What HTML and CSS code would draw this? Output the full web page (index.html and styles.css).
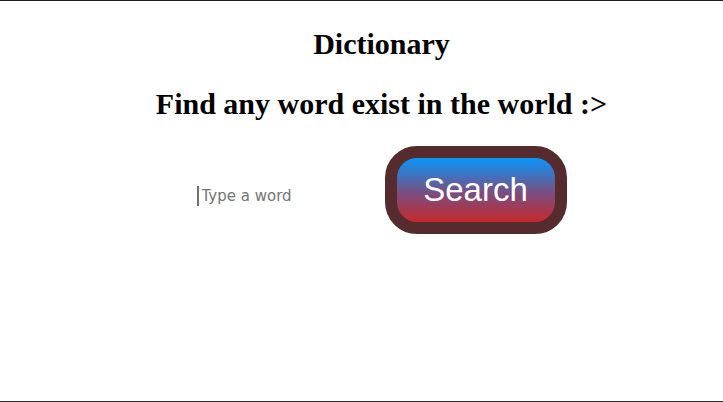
FILE: index.html
```html
<!DOCTYPE html>
<html>
<head>
<meta charset="utf-8">
<title>Dictionary</title>
<link rel="stylesheet" href="styles.css">
</head>
<body>
<main class="page">
  <h1 class="title">Dictionary</h1>
  <h2 class="subtitle">Find any word exist in the world :&gt;</h2>
  <div class="search-row">
    <input class="word-input" type="text" placeholder="Type a word">
    <button class="search-btn" type="button">Search</button>
  </div>
</main>
</body>
</html>
```
FILE: styles.css
```css
html, body {
  margin: 0;
  padding: 0;
  background: #ffffff;
}

.page {
  box-sizing: border-box;
  height: 402px;
  border-top: 1px solid #1c1f2b;
  border-bottom: 1px solid #262a34;
  padding-left: 40px;
  text-align: center;
  font-family: "Liberation Serif", "Times New Roman", serif;
  color: #000;
  overflow: hidden;
}

.title,
.subtitle {
  font-size: 30px;
  font-weight: bold;
  margin: 26px 0 25px;
  line-height: normal;
}

.search-row {
  display: flex;
  justify-content: center;
  align-items: center;
  gap: 28px;
}

.word-input {
  width: 160px;
  box-sizing: border-box;
  border: none;
  outline: none;
  padding: 1px 2px 1px 3px;
  margin-top: 12px;
  font-family: "DejaVu Sans", Tahoma, sans-serif;
  font-size: 15px;
  line-height: 18px;
  color: #333;
  background: transparent;
  border-left: 2px solid #707070;
}

.word-input::placeholder {
  color: #757575;
}

.search-btn {
  box-sizing: border-box;
  width: 182px;
  height: 88px;
  border: 12px solid #552b2d;
  border-radius: 32px;
  background: linear-gradient(#0896fa, #7a4d80 55%, #c6282a);
  color: #ffffff;
  font-family: "Liberation Sans", Arial, sans-serif;
  font-size: 33px;
  padding: 0;
  cursor: pointer;
}
```
